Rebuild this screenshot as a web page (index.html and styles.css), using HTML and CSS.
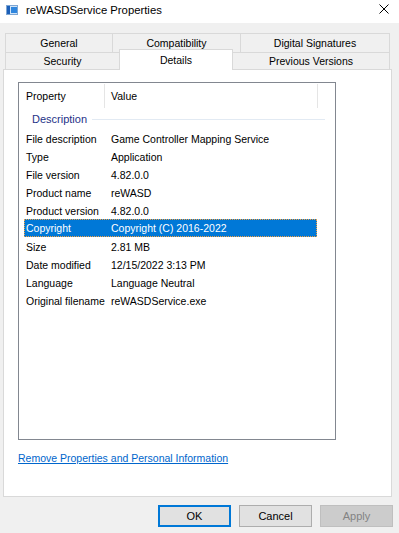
FILE: index.html
```html
<!DOCTYPE html>
<html>
<head>
  <title>reWASDService Properties</title>
  <link rel="stylesheet" href="styles.css">
</head>
<body>
  <div class="titlebar">
    <svg class="app-icon" width="12" height="10" viewBox="0 0 12 10">
      <rect x="0.5" y="0.5" width="11" height="9" fill="#cfe3f7" stroke="#7ea6d3"/>
      <rect x="1" y="1" width="3" height="8" fill="#1c5fb8"/>
      <rect x="5" y="2" width="6" height="6" fill="#2f86de"/>
    </svg>
    <span class="title">reWASDService Properties</span>
    <svg class="close" width="10" height="10" viewBox="0 0 10 10">
      <path d="M0.5 0.5 L9.5 9.5 M9.5 0.5 L0.5 9.5" stroke="#000" stroke-width="1"/>
    </svg>
  </div>

  <div class="sheet">
    <div class="tab-row back">
      <div class="tab w-general">General</div>
      <div class="tab w-compat">Compatibility</div>
      <div class="tab w-digital">Digital Signatures</div>
    </div>
    <div class="tab-row front">
      <div class="tab w-security">Security</div>
      <div class="tab w-details active">Details</div>
      <div class="tab w-previous">Previous Versions</div>
    </div>

    <div class="panel">
      <div class="listview">
        <div class="lv-header">
          <div class="hcell col-prop">Property</div>
          <div class="hcell col-value">Value</div>
        </div>
        <div class="group">
          <span class="group-label">Description</span>
          <span class="group-line"></span>
        </div>
        <div class="row"><span class="cell-prop">File description</span><span class="cell-value">Game Controller Mapping Service</span></div>
        <div class="row"><span class="cell-prop">Type</span><span class="cell-value">Application</span></div>
        <div class="row"><span class="cell-prop">File version</span><span class="cell-value">4.82.0.0</span></div>
        <div class="row"><span class="cell-prop">Product name</span><span class="cell-value">reWASD</span></div>
        <div class="row"><span class="cell-prop">Product version</span><span class="cell-value">4.82.0.0</span></div>
        <div class="row selected"><span class="cell-prop">Copyright</span><span class="cell-value">Copyright (C) 2016-2022</span></div>
        <div class="row"><span class="cell-prop">Size</span><span class="cell-value">2.81 MB</span></div>
        <div class="row"><span class="cell-prop">Date modified</span><span class="cell-value">12/15/2022 3:13 PM</span></div>
        <div class="row"><span class="cell-prop">Language</span><span class="cell-value">Language Neutral</span></div>
        <div class="row"><span class="cell-prop">Original filename</span><span class="cell-value">reWASDService.exe</span></div>
      </div>
      <a class="remove-link" href="#">Remove Properties and Personal Information</a>
    </div>

    <div class="buttons">
      <button class="btn default">OK</button>
      <button class="btn">Cancel</button>
      <button class="btn" disabled>Apply</button>
    </div>
  </div>
</body>
</html>
```

FILE: styles.css
```css
body {
  margin: 0;
  width: 399px;
  height: 533px;
  overflow: hidden;
  background: #f0f0f0;
  font-family: 'Liberation Sans', Arial, sans-serif;
  font-size: 10.5px;
  color: #000;
}

.titlebar {
  display: flex;
  align-items: center;
  height: 23px;
  background: #fff;
}

.app-icon {
  margin-left: 6px;
  margin-top: -3px;
}

.title {
  margin-left: 8px;
  font-size: 11.3px;
  margin-top: -3px;
}

.close {
  margin-left: auto;
  margin-right: 10px;
  margin-top: -6px;
}

.sheet {
  padding-top: 10px;
}

.tab-row {
  display: flex;
  align-items: flex-start;
  margin-left: 5px;
}

.tab-row.back {
  height: 19px;
}

.tab-row.front {
  height: 17px;
}

.tab {
  box-sizing: border-box;
  height: 100%;
  border: 1px solid #d9d9d9;
  border-bottom: none;
  margin-right: -1px;
  background: #f0f0f0;
  display: flex;
  align-items: center;
  justify-content: center;
}

.tab.active {
  position: relative;
  z-index: 1;
  height: 21px;
  margin-top: -3px;
  background: #fff;
}

.w-general { width: 108px; }
.w-compat { width: 129px; }
.w-digital { width: 150px; }
.w-security { width: 115px; }
.w-details { width: 114px; }
.w-previous { width: 158px; }

.panel {
  box-sizing: border-box;
  margin-left: 3px;
  width: 389px;
  height: 428px;
  border: 1px solid #d9d9d9;
  background: #fff;
  padding: 12px 0 0 14px;
}

.listview {
  box-sizing: border-box;
  width: 318px;
  height: 358px;
  border: 1px solid #828790;
}

.lv-header {
  display: flex;
  height: 26px;
}

.hcell {
  box-sizing: border-box;
  margin-top: 1px;
  height: 24px;
  line-height: 24px;
  border-right: 1px solid #e5e5e5;
}

.hcell.col-prop {
  width: 86px;
  padding-left: 7px;
}

.hcell.col-value {
  width: 213px;
  padding-left: 6px;
}

.group {
  display: flex;
  align-items: center;
  height: 20px;
  padding-left: 13px;
  margin-right: 10px;
}

.group-label {
  color: #1e3287;
  font-size: 11px;
}

.group-line {
  flex: 1;
  height: 1px;
  margin-left: 5px;
  background: #e2eaf3;
}

.row {
  box-sizing: border-box;
  display: flex;
  width: 293px;
  height: 18px;
  line-height: 18px;
  margin-left: 5px;
  border: 1px solid transparent;
}

.row.selected {
  background: #0078d7;
  color: #fff;
  border: 1px dotted #f5a142;
  line-height: 16px;
}

.cell-prop {
  width: 84px;
  padding-left: 1px;
}

.cell-value {
  padding-left: 1px;
}

.remove-link {
  display: inline-block;
  margin-top: 12px;
  color: #0066cc;
  text-decoration: underline;
  font-size: 10.5px;
}

.buttons {
  display: flex;
  justify-content: flex-end;
  gap: 8px;
  margin-top: 8px;
  padding-right: 6px;
}

.btn {
  box-sizing: border-box;
  width: 73px;
  height: 22px;
  padding: 0;
  background: #e1e1e1;
  border: 1px solid #adadad;
  font-family: 'Liberation Sans', Arial, sans-serif;
  font-size: 11px;
  color: #000;
}

.btn.default {
  border: 2px solid #0078d7;
}

.btn:disabled {
  background: #cccccc;
  border-color: #bfbfbf;
  color: #838383;
}
```
